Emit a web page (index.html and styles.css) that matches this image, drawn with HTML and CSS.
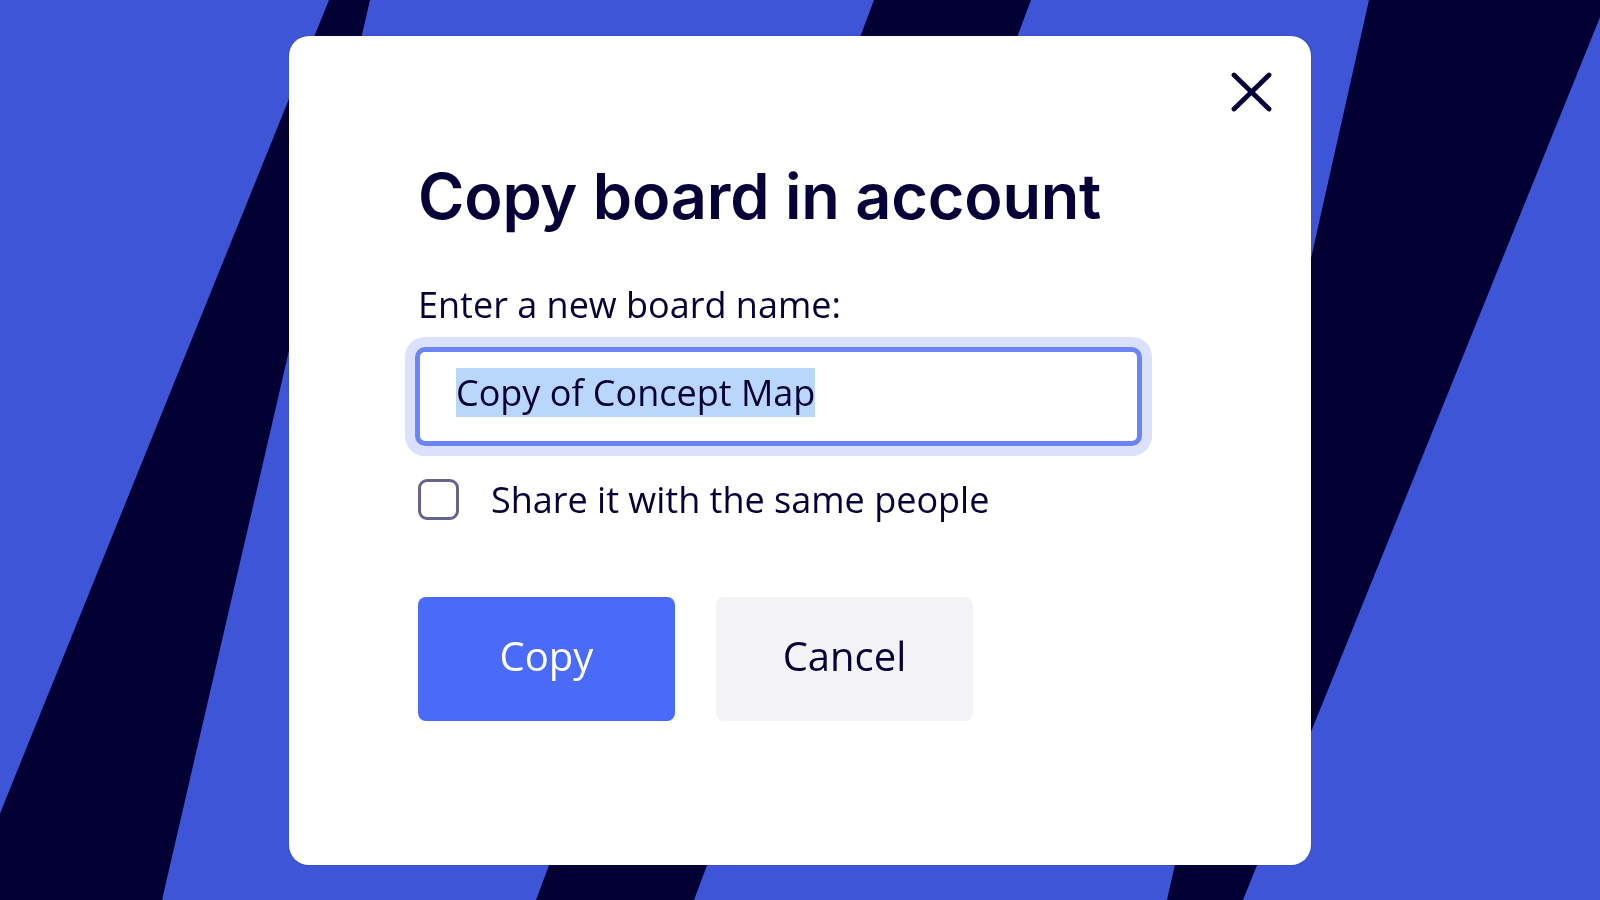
FILE: index.html
```html
<!DOCTYPE html>
<html lang="en">
<head>
  <meta charset="UTF-8" />
  <meta name="viewport" content="width=device-width, initial-scale=1.0"/>
  <title>Copy board in account</title>
  <link rel="stylesheet" href="styles.css">
</head>
<body>
  <svg class="backdrop" viewBox="0 0 1600 900" preserveAspectRatio="none" aria-hidden="true">
    <polygon points="329,0 370,0 162,900 -35,900" />
    <polygon points="874,0 1031,0 694,900 536,900" />
    <polygon points="1369,0 1607,0 1243,900 1167,900" />
  </svg>

  <div class="modal" role="dialog" aria-labelledby="modalTitle">
    <div class="modal-top">
      <button class="close-btn" aria-label="Close">
        <svg viewBox="0 0 41 40" width="41" height="40">
          <path d="M3 3 L38 37 M38 3 L3 37" />
        </svg>
      </button>
    </div>

    <h2 class="modal-title" id="modalTitle">Copy board in account</h2>

    <label class="field-label" for="boardName">Enter a new board name:</label>
    <div class="name-field" id="boardName"><span class="selected">Copy of Concept Map</span></div>

    <label class="share-row">
      <span class="check-box"></span>
      <span>Share it with the same people</span>
    </label>

    <div class="actions">
      <button class="btn btn-primary">Copy</button>
      <button class="btn btn-secondary">Cancel</button>
    </div>
  </div>
</body>
</html>
```

FILE: styles.css
```css
body {
  margin: 0;
  height: 100vh;
  background: #3f55d7;
  font-family: "Open Sans", "Noto Sans", sans-serif;
  color: #050038;
  display: flex;
  justify-content: center;
  align-items: center;
  overflow: hidden;
}

.backdrop {
  position: fixed;
  top: 0;
  left: 0;
  width: 100%;
  height: 100%;
  fill: #030034;
}

.modal {
  position: relative;
  box-sizing: border-box;
  width: 1022px;
  height: 829px;
  background: #fff;
  border-radius: 20px;
  box-shadow: 0 0 2px rgba(5, 0, 56, 0.25);
  padding: 36px 39px 0 129px;
  display: flex;
  flex-direction: column;
  align-items: flex-start;
}

.modal-top {
  align-self: stretch;
  display: flex;
  justify-content: flex-end;
}

.close-btn {
  width: 41px;
  height: 40px;
  padding: 0;
  border: none;
  background: none;
  cursor: pointer;
}

.close-btn svg {
  display: block;
  fill: none;
  stroke: #050038;
  stroke-width: 4.8;
  stroke-linecap: round;
}

.modal-title {
  margin: 46px 0 0;
  font-family: Inter, "Open Sans", sans-serif;
  font-weight: 600;
  font-size: 63px;
  line-height: 76px;
  letter-spacing: -0.2px;
}

.field-label {
  margin-top: 46px;
  font-size: 36px;
}

.name-field {
  box-sizing: border-box;
  margin: 18px 0 0 -3px;
  width: 727px;
  height: 99px;
  border: 5px solid #6b84f8;
  border-radius: 10px;
  box-shadow: 0 0 0 10px #dbe0fb;
  padding: 0 36px 7px;
  display: flex;
  align-items: center;
  font-size: 36px;
}

.selected {
  background: #b9d6fb;
}

.share-row {
  margin-top: 29px;
  display: flex;
  align-items: center;
  gap: 32px;
  font-size: 36px;
}

.check-box {
  box-sizing: border-box;
  width: 41px;
  height: 41px;
  border: 3px solid #66648b;
  border-radius: 9px;
}

.actions {
  margin-top: 73px;
  display: flex;
  gap: 41px;
}

.btn {
  width: 257px;
  height: 124px;
  padding: 0 0 6px;
  border: none;
  border-radius: 8px;
  font-family: "Open Sans", sans-serif;
  font-size: 40px;
  cursor: pointer;
}

.btn-primary {
  background: #4a6bf8;
  color: #fff;
}

.btn-secondary {
  background: #f3f3f6;
  color: #050038;
}
```
